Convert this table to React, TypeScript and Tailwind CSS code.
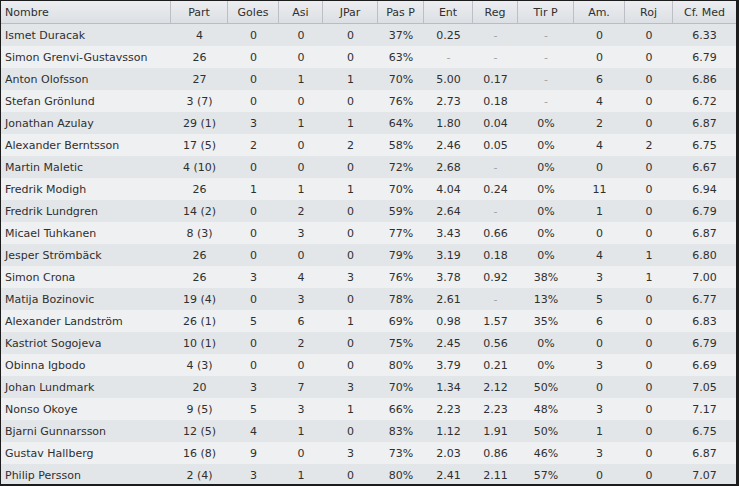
const cols = ["Nombre", "Part", "Goles", "Asi", "JPar", "Pas P", "Ent", "Reg", "Tir P", "Am.", "Roj", "Cf. Med"]

const players: string[][] = [
  ["Ismet Duracak", "4", "0", "0", "0", "37%", "0.25", "-", "-", "0", "0", "6.33"],
  ["Simon Grenvi-Gustavsson", "26", "0", "0", "0", "63%", "-", "-", "-", "0", "0", "6.79"],
  ["Anton Olofsson", "27", "0", "1", "1", "70%", "5.00", "0.17", "-", "6", "0", "6.86"],
  ["Stefan Grönlund", "3 (7)", "0", "0", "0", "76%", "2.73", "0.18", "-", "4", "0", "6.72"],
  ["Jonathan Azulay", "29 (1)", "3", "1", "1", "64%", "1.80", "0.04", "0%", "2", "0", "6.87"],
  ["Alexander Berntsson", "17 (5)", "2", "0", "2", "58%", "2.46", "0.05", "0%", "4", "2", "6.75"],
  ["Martin Maletic", "4 (10)", "0", "0", "0", "72%", "2.68", "-", "0%", "0", "0", "6.67"],
  ["Fredrik Modigh", "26", "1", "1", "1", "70%", "4.04", "0.24", "0%", "11", "0", "6.94"],
  ["Fredrik Lundgren", "14 (2)", "0", "2", "0", "59%", "2.64", "-", "0%", "1", "0", "6.79"],
  ["Micael Tuhkanen", "8 (3)", "0", "3", "0", "77%", "3.43", "0.66", "0%", "0", "0", "6.87"],
  ["Jesper Strömbäck", "26", "0", "0", "0", "79%", "3.19", "0.18", "0%", "4", "1", "6.80"],
  ["Simon Crona", "26", "3", "4", "3", "76%", "3.78", "0.92", "38%", "3", "1", "7.00"],
  ["Matija Bozinovic", "19 (4)", "0", "3", "0", "78%", "2.61", "-", "13%", "5", "0", "6.77"],
  ["Alexander Landström", "26 (1)", "5", "6", "1", "69%", "0.98", "1.57", "35%", "6", "0", "6.83"],
  ["Kastriot Sogojeva", "10 (1)", "0", "2", "0", "75%", "2.45", "0.56", "0%", "0", "0", "6.79"],
  ["Obinna Igbodo", "4 (3)", "0", "0", "0", "80%", "3.79", "0.21", "0%", "3", "0", "6.69"],
  ["Johan Lundmark", "20", "3", "7", "3", "70%", "1.34", "2.12", "50%", "0", "0", "7.05"],
  ["Nonso Okoye", "9 (5)", "5", "3", "1", "66%", "2.23", "2.23", "48%", "3", "0", "7.17"],
  ["Bjarni Gunnarsson", "12 (5)", "4", "1", "0", "83%", "1.12", "1.91", "50%", "1", "0", "6.75"],
  ["Gustav Hallberg", "16 (8)", "9", "0", "3", "73%", "2.03", "0.86", "46%", "3", "0", "6.87"],
  ["Philip Persson", "2 (4)", "3", "1", "0", "80%", "2.41", "2.11", "57%", "0", "0", "7.07"],
]

const grid = "grid grid-cols-[170px_57px_51px_44px_55px_46px_49px_45px_56px_51px_48px_63px]"

export default function App() {
  return (
    <div className="w-[739px] h-[486px] overflow-hidden border-t border-l border-r-[3px] border-b-2 border-[#1c1c1c] bg-[#eef0f2] font-['DejaVu_Sans',sans-serif] text-[11px] text-[#2f2f2f]">
      <div className={`${grid} h-[23px] border-b border-[#b9bdc3] bg-gradient-to-b from-[#eceef1] to-[#dcdfe3]`}>
        {cols.map((c, i) => (
          <div
            key={c}
            className={`flex items-center pt-[2px] border-r border-[#bcc0c6] ${i === 0 ? "pl-[4px]" : "justify-center"} ${i === cols.length - 1 ? "border-r-0" : ""}`}
          >
            {c}
          </div>
        ))}
      </div>
      {players.map((row, r) => (
        <div key={row[0]} className={`${grid} h-[22px] ${r % 2 === 0 ? "bg-[#e3e6e9]" : "bg-[#eef0f2]"}`}>
          {row.map((v, i) => (
            <div
              key={i}
              className={`flex items-center pt-[2px] ${i === 0 ? "pl-[4px]" : "justify-center"} ${v === "-" ? "text-[#a0a3a7]" : ""}`}
            >
              {v}
            </div>
          ))}
        </div>
      ))}
    </div>
  )
}
